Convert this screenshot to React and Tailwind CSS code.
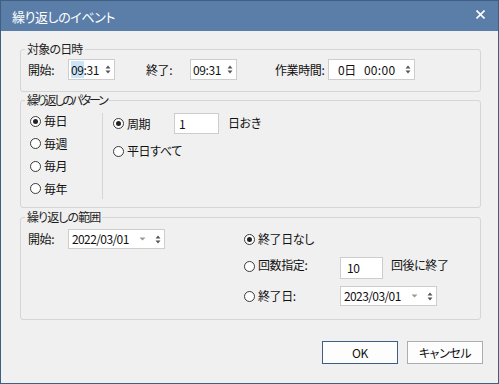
import React from 'react';

const font = "font-['Noto_Sans_CJK_JP','Noto_Sans',sans-serif] [font-feature-settings:'palt']";

const Spin = () => (
  <svg width="6" height="9" viewBox="0 0 6 9" className="shrink-0">
    <path d="M3 0.5 L5.5 3.5 L0.5 3.5 Z" fill="#555" />
    <path d="M0.5 5.5 L5.5 5.5 L3 8.5 Z" fill="#555" />
  </svg>
);

const Drop = () => (
  <svg width="7" height="4" viewBox="0 0 7 4" className="shrink-0">
    <path d="M0.5 0.5 L6.5 0.5 L3.5 3.5 Z" fill="#999" />
  </svg>
);

const Radio = ({ checked }) => (
  <svg width="11" height="11" viewBox="0 0 11 11" className="shrink-0">
    <circle cx="5.5" cy="5.5" r="5" fill="#fff" stroke="#3a3a3a" strokeWidth="1" />
    {checked && <circle cx="5.5" cy="5.5" r="2.5" fill="#222" />}
  </svg>
);

const Group = ({ title, titleClass = '', className, children }) => (
  <div className={`relative ml-[19px] w-[461px] rounded-[3px] border border-[#d5d5d5] ${className}`}>
    <span className={`absolute left-[4px] top-[-9px] bg-[#f0f0f0] px-[2px] leading-[16px] text-[#1e1e1e] ${titleClass}`}>
      {title}
    </span>
    {children}
  </div>
);

const Box = ({ className, children }) => (
  <div className={`flex items-center border border-[#cdcdcd] bg-white ${className}`}>{children}</div>
);

const RadioRow = ({ checked, label, className }) => (
  <div className={`flex items-center gap-[3px] ${className}`}>
    <Radio checked={checked} />
    <span>{label}</span>
  </div>
);

const DateBox = ({ value, className }) => (
  <Box className={`h-[20px] w-[97px] pl-[3px] ${className}`}>
    <span className="w-[67px] tracking-[-0.6px]">{value}</span>
    <Drop />
    <span className="w-[9px]" />
    <Spin />
  </Box>
);

export default function App() {
  return (
    <div className={`flex h-[384px] w-[499px] flex-col border border-[#3e5e84] bg-[#f0f0f0] text-[12px] leading-[16px] tracking-[-0.4px] text-[#111] ${font}`}>
      {/* title bar */}
      <div className="flex h-[30px] shrink-0 items-center justify-between bg-[#5a7ea8] pl-[11px] pr-[13px] pt-[1px]">
        <span className="text-[13px] text-white">繰り返しのイベント</span>
        <svg width="9" height="9" viewBox="0 0 9 9" className="mb-[4px]">
          <path d="M0.5 0.5 L8.5 8.5 M8.5 0.5 L0.5 8.5" stroke="#fff" strokeWidth="1.6" />
        </svg>
      </div>

      {/* 対象の日時 */}
      <Group title="対象の日時" titleClass="tracking-[-0.8px]" className="mt-[18px] h-[43px]">
        <div className="flex items-center pl-[7px] pt-[9px]">
          <span className="w-[40px]">開始:</span>
          <Box className="h-[21px] w-[47px] pl-[2px] pr-[3px]">
            <span className="flex-1">
              <span className="bg-[#cce4f7]">09</span>:31
            </span>
            <Spin />
          </Box>
          <span className="ml-[31px] w-[44px]">終了:</span>
          <Box className="h-[21px] w-[47px] pl-[2px] pr-[3px]">
            <span className="flex-1">09:31</span>
            <Spin />
          </Box>
          <span className="ml-[38px] w-[53px]">作業時間:</span>
          <Box className="h-[21px] w-[87px] pl-[9px] pr-[3px]">
            <span>0日</span>
            <span className="ml-[8px] flex-1 tracking-[0.3px]">00:00</span>
            <Spin />
          </Box>
        </div>
      </Group>

      {/* 繰り返しのパターン */}
      <Group title="繰り返しのパターン" titleClass="tracking-[-2.2px]" className="mt-[8px] h-[108px]">
        <div className="flex pt-[12px]">
          <div className="flex w-[81px] flex-col gap-[6.5px] pl-[9px]">
            <RadioRow checked label="毎日" />
            <RadioRow label="毎週" />
            <RadioRow label="毎月" />
            <RadioRow label="毎年" />
          </div>
          <div className="h-[86px] w-px bg-[#d5d5d5]" />
          <div className="flex flex-col pl-[10px]">
            <div className="flex items-center">
              <RadioRow checked label="周期" className="w-[61px]" />
              <Box className="h-[21px] w-[45px] pl-[4px]">
                <span>1</span>
              </Box>
              <span className="ml-[9px] mb-[2px]">日おき</span>
            </div>
            <RadioRow label="平日すべて" className="mt-[9px]" />
          </div>
        </div>
      </Group>

      {/* 繰り返しの範囲 */}
      <Group title="繰り返しの範囲" titleClass="tracking-[-0.9px]" className="mt-[9px] h-[103px]">
        <div className="flex">
          <div className="flex w-[223px] items-center self-start pl-[7px] pt-[11px]">
            <span className="w-[40px]">開始:</span>
            <DateBox value="2022/03/01" />
          </div>
          <div className="flex flex-col">
            <RadioRow checked label="終了日なし" className="mt-[13px]" />
            <div className="mt-[10px] flex items-start">
              <div className="flex w-[96px] items-center gap-[3px] pt-[2px]">
                <Radio />
                <span className="-mt-[2px]">回数指定:</span>
              </div>
              <Box className="h-[22px] w-[43px] pl-[6px]">
                <span>10</span>
              </Box>
              <span className="ml-[8px]">回後に終了</span>
            </div>
            <div className="mt-[7px] flex items-center">
              <RadioRow label="終了日:" className="w-[96px]" />
              <DateBox value="2023/03/01" className="w-[96px] pl-[2px]" />
            </div>
          </div>
        </div>
      </Group>

      {/* buttons */}
      <div className="mt-[21px] flex gap-[9px] pl-[321px]">
        <button className="h-[23px] w-[76px] border border-[#3e5e84] bg-[#fdfdfd]">OK</button>
        <button className="h-[23px] w-[76px] border border-[#adadad] bg-[#fdfdfd]">キャンセル</button>
      </div>
    </div>
  );
}
